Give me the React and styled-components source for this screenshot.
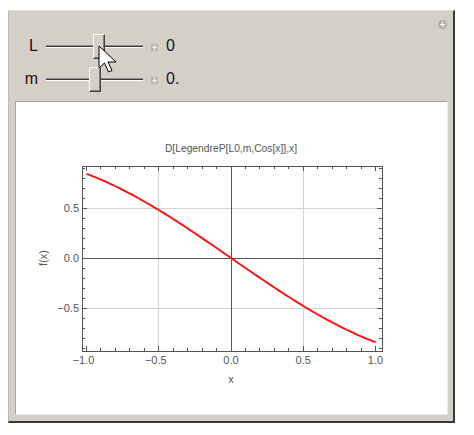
import React from "react";
import styled, { createGlobalStyle } from "styled-components";

const Global = createGlobalStyle`
  html, body {
    margin: 0;
    padding: 0;
    background: #ffffff;
  }
  body {
    font-family: "Liberation Sans", Arial, sans-serif;
  }
`;

const Page = styled.div`
  padding: 10px 0 0 8px;
`;

const Panel = styled.div`
  position: relative;
  width: 444px;
  background: #d4d0c8;
  border-top: 1px solid #e4e1da;
  border-left: 1px solid #bdb9b1;
  border-right: 2px solid #3a3a3a;
  border-bottom: 2px solid #3a3a3a;
  display: flex;
  flex-direction: column;
`;

const Controls = styled.div`
  display: flex;
  flex-direction: column;
  gap: 8px;
  padding: 23px 0 9px 0;
`;

const Row = styled.div`
  display: grid;
  grid-template-columns: 26px 100px 7px auto;
  column-gap: 8px;
  align-items: center;
  height: 25px;
`;

const Label = styled.span`
  text-align: right;
  font-size: 16px;
  color: #2a0a0a;
  margin-right: -3px;
  padding-bottom: 2px;
`;

const Slider = styled.div`
  position: relative;
  height: 25px;
  margin-left: 3px;
`;

const Track = styled.div`
  position: absolute;
  left: 0;
  right: 0;
  top: 11px;
  height: 1px;
  background: #3c3c3c;
  border-top: 1px solid #8a8a8a;
  border-bottom: 1px solid #ffffff;
`;

const Thumb = styled.div`
  position: absolute;
  top: 0;
  left: ${({ pos }) => pos}px;
  width: 10px;
  height: 23px;
  background: #d4d0c8;
  border-top: 1px solid #ffffff;
  border-left: 1px solid #ffffff;
  border-right: 1px solid #404040;
  border-bottom: 1px solid #404040;
  box-shadow: inset -1px -1px 0 #808080;
`;

const PlusBox = styled.div`
  width: 7px;
  height: 7px;
  background: #bcb8b0;
  display: flex;
  align-items: center;
  justify-content: center;
  margin-top: 2px;
  &::before {
    content: "";
    width: 5px;
    height: 1px;
    background: #f4f4f4;
    position: absolute;
  }
  &::after {
    content: "";
    width: 1px;
    height: 5px;
    background: #f4f4f4;
  }
`;

const Value = styled.span`
  font-size: 16px;
  color: #141430;
  padding-bottom: 2px;
`;

const Corner = styled.div`
  position: absolute;
  top: 9px;
  right: 6px;
  width: 9px;
  height: 9px;
  border-radius: 50%;
  background: #b4b0a8;
  display: flex;
  align-items: center;
  justify-content: center;
  &::before {
    content: "";
    position: absolute;
    width: 5px;
    height: 1.6px;
    background: #fff;
  }
  &::after {
    content: "";
    width: 1.6px;
    height: 5px;
    background: #fff;
  }
`;

const Pane = styled.div`
  margin: 0 5px 6px 6px;
  height: 312px;
  background: #ffffff;
  border-top: 1px solid #a8a49c;
  border-left: 1px solid #a8a49c;
  border-right: 1px solid #ebe9e4;
  border-bottom: 1px solid #ebe9e4;
`;

const Cursor = styled.svg`
  position: absolute;
  left: 89px;
  top: 34px;
  pointer-events: none;
`;

const X = (u) => 215 + 144.5 * u;
const Y = (v) => 156 - 100 * v;

const Plot = () => {
  const pts = [];
  for (let i = 0; i <= 100; i++) {
    const u = -1 + (2 * i) / 100;
    pts.push(`${X(u).toFixed(2)},${Y(-Math.sin(u)).toFixed(2)}`);
  }
  const fl = 66, fr = 366, ft = 64, fb = 249;
  const ticks = [];
  for (let k = -10; k <= 10; k++) {
    const u = k / 10;
    const x = X(u);
    if (x < fl || x > fr) continue;
    const major = k % 5 === 0;
    const len = major ? 5 : 3;
    ticks.push(<line key={"xb" + k} x1={x} x2={x} y1={fb} y2={fb - len} />);
    ticks.push(<line key={"xt" + k} x1={x} x2={x} y1={ft} y2={ft + len} />);
  }
  for (let k = -9; k <= 9; k++) {
    const y = Y(k / 10);
    const major = k % 5 === 0;
    const len = major ? 5 : 3;
    ticks.push(<line key={"yl" + k} x1={fl} x2={fl + len} y1={y} y2={y} />);
    ticks.push(<line key={"yr" + k} x1={fr} x2={fr - len} y1={y} y2={y} />);
  }
  const txt = { fontFamily: "'Liberation Sans', Arial, sans-serif", fill: "#555" };
  return (
    <svg width="431" height="312" viewBox="0 0 431 312">
      <text x="215" y="50" fontSize="10.3" textAnchor="middle" style={txt}>
        D[LegendreP[L0,m,Cos[x]],x]
      </text>
      <g stroke="#d2d2d2" strokeWidth="1" shapeRendering="crispEdges">
        <line x1={X(-0.5)} x2={X(-0.5)} y1={ft} y2={fb} />
        <line x1={X(0.5)} x2={X(0.5)} y1={ft} y2={fb} />
        <line x1={fl} x2={fr} y1={Y(0.5)} y2={Y(0.5)} />
        <line x1={fl} x2={fr} y1={Y(-0.5)} y2={Y(-0.5)} />
      </g>
      <g stroke="#555" strokeWidth="1" shapeRendering="crispEdges">
        <line x1={X(0)} x2={X(0)} y1={ft} y2={fb} />
        <line x1={fl} x2={fr} y1={Y(0)} y2={Y(0)} />
        <rect x={fl} y={ft} width={fr - fl} height={fb - ft} fill="none" />
        {ticks}
      </g>
      <polyline points={pts.join(" ")} fill="none" stroke="#ff1010" strokeWidth="1.9" />
      <g fontSize="11" style={txt} textAnchor="end">
        <text x="63" y={Y(0.5) + 4}>0.5</text>
        <text x="63" y={Y(0) + 4}>0.0</text>
        <text x="63" y={Y(-0.5) + 4}>−0.5</text>
      </g>
      <g fontSize="11" style={txt} textAnchor="middle">
        <text x={X(-1) - 3} y="262">−1.0</text>
        <text x={X(-0.5) - 3} y="262">−0.5</text>
        <text x={X(0)} y="262">0.0</text>
        <text x={X(0.5)} y="262">0.5</text>
        <text x={X(1)} y="262">1.0</text>
        <text x="215" y="281">x</text>
      </g>
      <text
        x="0"
        y="0"
        fontSize="11"
        textAnchor="middle"
        style={txt}
        transform="translate(31 156) rotate(-90)"
      >
        f(x)
      </text>
    </svg>
  );
};

const SliderRow = ({ label, value, pos }) => (
  <Row>
    <Label>{label}</Label>
    <Slider>
      <Track />
      <Thumb pos={pos} />
    </Slider>
    <PlusBox />
    <Value>{value}</Value>
  </Row>
);

export default function App() {
  return (
    <>
      <Global />
      <Page>
        <Panel>
          <Corner />
          <Controls>
            <SliderRow label="L" value="0" pos={47} />
            <SliderRow label="m" value="0." pos={43} />
          </Controls>
          <Pane>
            <Plot />
          </Pane>
          <Cursor width="22" height="30" viewBox="0 0 22 30">
            <path
              d="M1 1 L1 23 L6.5 18 L10.5 27 L14 25.5 L10 17 L18 17 Z"
              fill="#ffffff"
              stroke="#000000"
              strokeWidth="1"
              strokeLinejoin="miter"
            />
          </Cursor>
        </Panel>
      </Page>
    </>
  );
}
